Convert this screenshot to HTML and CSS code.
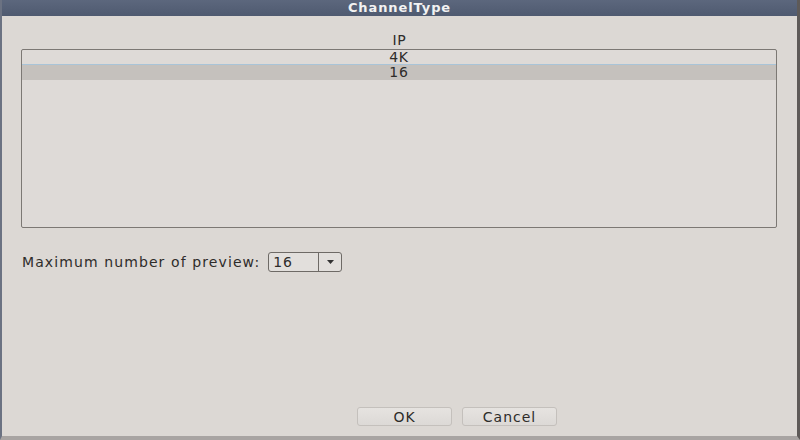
FILE: index.html
```html
<!DOCTYPE html>
<html lang="en">
<head>
    <meta charset="UTF-8">
    <meta name="viewport" content="width=device-width, initial-scale=1.0">
    <title>ChannelType</title>
    <link rel="stylesheet" href="styles.css">
</head>
<body>
    <div class="dialog">
        <div class="titlebar">ChannelType</div>
        <div class="content">
            <div class="list-head">IP</div>
            <div class="list">
                <div class="row">4K</div>
                <div class="row selected">16</div>
            </div>
            <div class="field">
                <span class="label">Maximum number of preview:</span>
                <div class="combo">
                    <span class="combo-value">16</span>
                    <span class="combo-arrow">
                        <svg width="7" height="4" viewBox="0 0 7 4"><polygon points="0,0 7,0 3.5,4" fill="#333"/></svg>
                    </span>
                </div>
            </div>
            <div class="buttons">
                <button class="btn">OK</button>
                <button class="btn">Cancel</button>
            </div>
        </div>
    </div>
</body>
</html>
```

FILE: styles.css
```css
html, body {
    margin: 0;
    padding: 0;
    height: 100%;
}
body {
    font-family: 'DejaVu Sans', sans-serif;
    background: #dcd8d4;
    color: #2e2c2a;
    overflow: hidden;
}
.dialog {
    width: 800px;
    height: 440px;
    display: flex;
    flex-direction: column;
    box-sizing: border-box;
    border-left: 2px solid #6b7282;
    border-right: 3px solid #5e5a58;
    border-bottom: 4px solid #a8a4a2;
    background: #dcd8d4;
}
.titlebar {
    height: 16px;
    line-height: 16px;
    background: linear-gradient(#5c677d, #4f5a70);
    color: #f2f2f2;
    font-weight: bold;
    font-size: 13px;
    letter-spacing: 0.9px;
    text-align: center;
}
.content {
    flex: 1;
    display: flex;
    flex-direction: column;
    padding: 0 20px 0 19px;
}
.list-head {
    text-align: center;
    font-size: 14px;
    letter-spacing: 0.8px;
    height: 17px;
    line-height: 17px;
    margin-top: 16px;
    padding-left: 1px;
}
.list {
    height: 177px;
    border: 1px solid #7c7874;
    border-radius: 2px;
    background: #dedad7;
}
.row {
    text-align: center;
    font-size: 14px;
    letter-spacing: 0.8px;
    height: 13px;
    line-height: 13px;
    padding-top: 1px;
}
.row:first-child {
    border-bottom: 1px solid #a9c4d8;
}
.row.selected {
    background: #c5c1bd;
    height: 14px;
    padding-top: 1px;
}
.field {
    display: flex;
    align-items: center;
    margin-top: 24px;
    margin-left: 1px;
    gap: 8px;
}
.label {
    font-size: 14px;
    letter-spacing: 1.1px;
}
.combo {
    display: flex;
    width: 72px;
    height: 18px;
    border: 1px solid #6e6a66;
    border-radius: 3px;
    background: #e2dfdc;
    font-size: 14px;
}
.combo-value {
    flex: 1;
    line-height: 18px;
    padding-left: 4px;
    letter-spacing: 0.8px;
    border-right: 1px solid #6e6a66;
}
.combo-arrow {
    width: 22px;
    display: flex;
    align-items: center;
    justify-content: center;
}
.buttons {
    margin-top: auto;
    margin-bottom: 10px;
    display: flex;
    justify-content: center;
    gap: 10px;
    padding-left: 116px;
}
.btn {
    width: 95px;
    height: 19px;
    padding: 0;
    font-family: 'DejaVu Sans', sans-serif;
    font-size: 14px;
    letter-spacing: 1px;
    color: #2e2c2a;
    background: linear-gradient(#e6e3e0, #dcd9d6);
    border: 1px solid #c4c0bc;
    border-radius: 3px;
}
```
